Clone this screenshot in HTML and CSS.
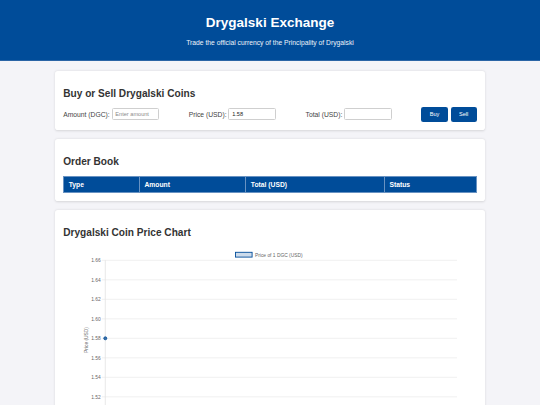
FILE: index.html
```html
<!DOCTYPE html>
<html lang="en">
<head>
<meta charset="utf-8">
<title>Drygalski Exchange</title>
<link rel="stylesheet" href="styles.css">
</head>
<body>
<header class="site-header">
  <h1 class="site-title">Drygalski Exchange</h1>
  <p class="site-subtitle">Trade the official currency of the Principality of Drygalski</p>
</header>
<main class="container">
  <section class="card">
    <h2 class="card-title">Buy or Sell Drygalski Coins</h2>
    <div class="trade-form">
      <div class="field">
        <label class="field-label" for="amount">Amount (DGC):</label>
        <input class="field-input" id="amount" type="text" placeholder="Enter amount">
      </div>
      <div class="field">
        <label class="field-label" for="price">Price (USD):</label>
        <input class="field-input" id="price" type="text" value="1.58">
      </div>
      <div class="field">
        <label class="field-label" for="total">Total (USD):</label>
        <input class="field-input" id="total" type="text">
      </div>
      <div class="actions">
        <button class="btn" type="button">Buy</button>
        <button class="btn" type="button">Sell</button>
      </div>
    </div>
  </section>

  <section class="card">
    <h2 class="card-title">Order Book</h2>
    <table class="order-table">
      <thead>
        <tr>
          <th>Type</th>
          <th>Amount</th>
          <th>Total (USD)</th>
          <th>Status</th>
        </tr>
      </thead>
      <tbody></tbody>
    </table>
  </section>

  <section class="card">
    <h2 class="card-title">Drygalski Coin Price Chart</h2>
    <svg class="chart" viewBox="0 0 414 185" width="414" height="185">
      <rect x="172.5" y="5.3" width="16.6" height="4.8" fill="#ccdbeb" stroke="#004c99" stroke-width="0.9"/>
      <text class="chart-text" x="192" y="9.5">Price of 1 DGC (USD)</text>
      <g stroke="#ececec" stroke-width="0.8">
        <line x1="38.9" y1="13.3" x2="394" y2="13.3"/>
        <line x1="38.9" y1="32.8" x2="394" y2="32.8"/>
        <line x1="38.9" y1="52.3" x2="394" y2="52.3"/>
        <line x1="38.9" y1="71.8" x2="394" y2="71.8"/>
        <line x1="38.9" y1="91.3" x2="394" y2="91.3"/>
        <line x1="38.9" y1="110.8" x2="394" y2="110.8"/>
        <line x1="38.9" y1="130.3" x2="394" y2="130.3"/>
        <line x1="38.9" y1="149.8" x2="394" y2="149.8"/>
        <line x1="38.9" y1="169.3" x2="394" y2="169.3"/>
      </g>
      <line x1="42.3" y1="13.3" x2="42.3" y2="172.7" stroke="#e2e2e2" stroke-width="0.8"/>
      <g class="chart-text" text-anchor="end">
        <text x="37.6" y="15">1.66</text>
        <text x="37.6" y="34.5">1.64</text>
        <text x="37.6" y="54">1.62</text>
        <text x="37.6" y="73.5">1.60</text>
        <text x="37.6" y="93">1.58</text>
        <text x="37.6" y="112.5">1.56</text>
        <text x="37.6" y="132">1.54</text>
        <text x="37.6" y="151.5">1.52</text>
        <text x="37.6" y="171">1.50</text>
      </g>
      <text class="chart-text" text-anchor="middle" transform="translate(24.7 93) rotate(-90)">Price (USD)</text>
      <circle cx="42.3" cy="91.3" r="1.5" fill="#3d6fa6" stroke="#004c99" stroke-width="0.8"/>
    </svg>
  </section>
</main>
</body>
</html>
```

FILE: styles.css
```css
html, body {
  margin: 0;
  padding: 0;
}

body {
  font-family: "Liberation Sans", Arial, Helvetica, sans-serif;
  background: #f4f4f8;
  color: #333;
}

.site-header {
  background: #004c99;
  color: #fff;
  text-align: center;
  padding: 6.2px 10px 6.8px;
  border-bottom: 1px solid #2b65a6;
}

.site-title {
  font-size: 13.5px;
  font-weight: bold;
  margin: 9px 0;
}

.site-subtitle {
  font-size: 6.75px;
  margin: 6.75px 0;
  color: #eef3f9;
}

.container {
  width: 430.4px;
  margin: 0 auto;
  padding-top: 10px;
}

.card {
  background: #fff;
  border-radius: 2.8px;
  box-shadow: 0 0.6px 2.5px rgba(0, 0, 0, 0.13);
  padding: 8.44px;
  margin-bottom: 9.4px;
}

.card-title {
  font-size: 10.125px;
  font-weight: bold;
  color: #333;
  margin: 8.4px 0;
}

.trade-form {
  display: flex;
  justify-content: space-between;
  align-items: center;
}

.field {
  display: flex;
  align-items: center;
  gap: 1.8px;
}

.field-label {
  font-size: 6.75px;
  color: #444;
}

.field-input {
  box-sizing: border-box;
  width: 47.8px;
  height: 11.8px;
  padding: 1.5px 2.8px;
  border: 1px solid #cfcfcf;
  border-radius: 1.5px;
  font-family: "Liberation Sans", Arial, sans-serif;
  font-size: 5.6px;
  color: #222;
  background: #fff;
  outline: none;
}

.field-input::placeholder {
  color: #8a8a8a;
}

.actions {
  display: flex;
  gap: 2.7px;
}

.btn {
  background: #004c99;
  color: #fff;
  border: none;
  border-radius: 2.25px;
  padding: 4.1px 8.44px;
  font-family: "Liberation Sans", Arial, sans-serif;
  font-size: 5.6px;
  line-height: 6.4px;
  cursor: pointer;
}

.order-table {
  width: 100%;
  border-collapse: collapse;
}

.order-table th {
  background: #004c99;
  color: #fff;
  font-size: 6.75px;
  font-weight: bold;
  text-align: left;
  line-height: 7px;
  padding: 4px 4.5px;
  border: 1px solid #6892c2;
}

.chart {
  display: block;
  width: 414px;
  height: 185px;
}

.chart-text {
  font-family: "Liberation Sans", Arial, sans-serif;
  font-size: 4.86px;
  fill: #666;
}
```
